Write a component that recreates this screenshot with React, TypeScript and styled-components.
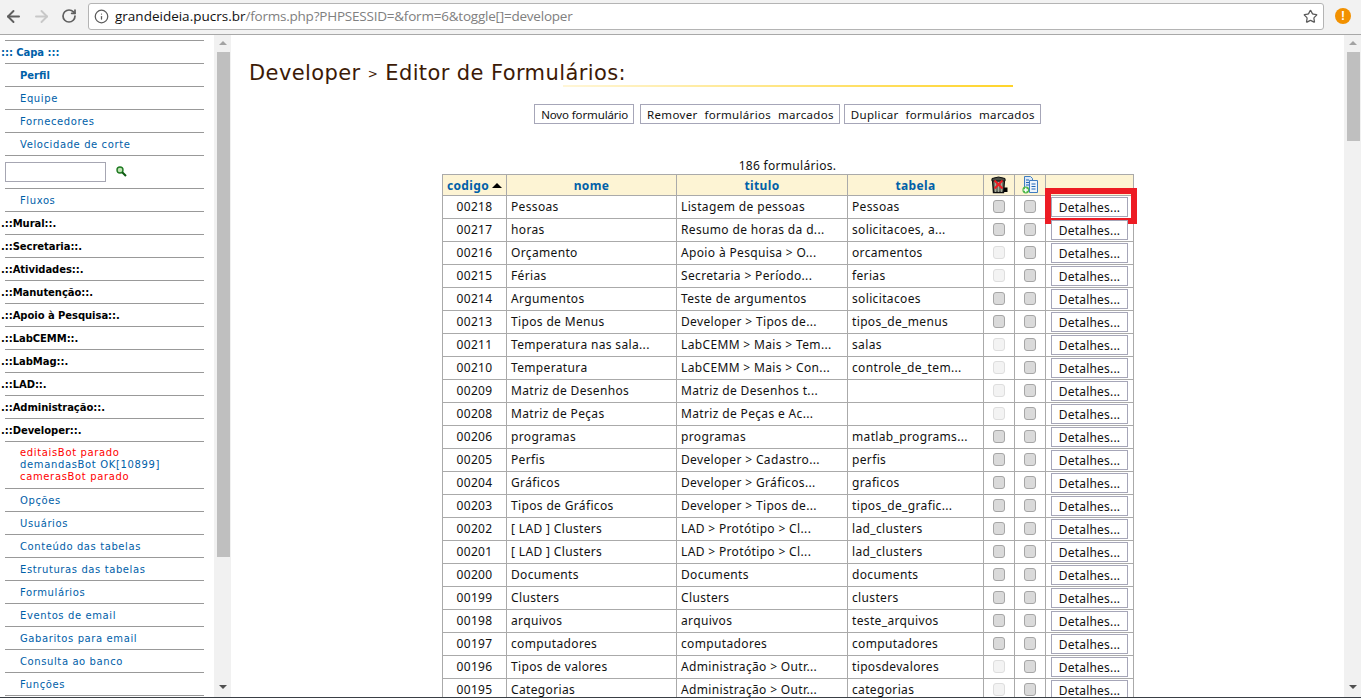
import React from 'react';
import styled, { createGlobalStyle } from 'styled-components';
import { ArrowLeft, ArrowRight, RotateCw, Info, Star } from 'lucide-react';

const GlobalStyle = createGlobalStyle`
    html, body {
        margin: 0;
        padding: 0;
        height: 100%;
        overflow: hidden;
        background: #fff;
    }
    * {
        box-sizing: border-box;
    }
`

const Page = styled.div`
    width: 1361px;
    height: 698px;
    display: flex;
    flex-direction: column;
    overflow: hidden;
    border-bottom: 1px solid #3a3f45;
`
const Toolbar = styled.div`
    height: 35px;
    flex: none;
    display: flex;
    align-items: flex-start;
    padding-top: 3px;
    background: #f2f2f2;
    border-bottom: 1px solid #a8a8a8;
`
const NavIcon = styled.div<{ $faded?: boolean }>`
    width: 28px;
    height: 26px;
    display: flex;
    align-items: center;
    justify-content: center;
    color: ${props => (props.$faded ? '#c8c8c8' : '#5f5f5f')};
`
const NavGroup = styled.div`
    width: 88px;
    flex: none;
    display: flex;
    margin-left: -1px;
    padding-right: 1px;
`
const AddressBar = styled.div`
    width: 1236px;
    height: 27px;
    flex: none;
    margin-left: 1px;
    display: flex;
    align-items: center;
    padding: 0 5px 0 5px;
    background: #fff;
    border: 1px solid #b4b4b4;
    border-radius: 3px;
    font-family: 'Open Sans', sans-serif;
    font-size: 13.5px;
    color: #808080;
`
const Url = styled.div`
    flex: 1;
    margin-left: 6px;
    padding-bottom: 2px;
    white-space: nowrap;
    letter-spacing: -0.22px;
    b {
        font-weight: 400;
        color: #111;
        letter-spacing: 0;
    }
`
const AlertBadge = styled.div`
    width: 16px;
    height: 16px;
    margin: 5px 0 0 11px;
    border-radius: 50%;
    background: #f29100;
    color: #fff;
    font-family: 'Liberation Sans', sans-serif;
    font-weight: 700;
    font-size: 12px;
    line-height: 16px;
    text-align: center;
`
const Body = styled.div`
    flex: 1;
    min-height: 0;
    display: flex;
`
const Sidebar = styled.nav`
    width: 214px;
    flex: none;
    padding-top: 5px;
    overflow: hidden;
    font-family: 'DejaVu Sans', sans-serif;
    font-size: 10px;
`
const SideRow = styled.div<{ $tall?: boolean }>`
    margin-left: 5px;
    width: 199px;
    height: ${props => (props.$tall ? '47px' : '23px')};
    border-top: 1px solid #999;
    padding-left: 15px;
    line-height: 24px;
    color: #0060a8;
    letter-spacing: 0.6px;
    white-space: nowrap;
`
const SideLink = styled(SideRow) <{ $strong?: boolean }>`
    font-weight: ${props => (props.$strong ? 700 : 400)};
    letter-spacing: ${props => (props.$strong ? '0' : '0.6px')};
`
const SideHeading = styled(SideRow) <{ $blue?: boolean }>`
    padding-left: 0;
    margin-left: 5px;
    text-indent: -4px;
    font-weight: 700;
    letter-spacing: -0.05px;
    color: ${props => (props.$blue ? '#0060a8' : '#000')};
`
const SearchRow = styled(SideRow)`
    height: 33px;
    padding: 6px 0 0 0;
    display: flex;
    align-items: flex-start;
`
const SearchInput = styled.input`
    width: 101px;
    height: 20px;
    border: 1px solid #a6a6b2;
    background: #fff;
    padding: 0;
`
const SearchIcon = styled.svg`
    margin: 4px 0 0 10px;
`
const BotBlock = styled(SideRow)`
    padding-top: 5px;
    line-height: 12px;
    letter-spacing: 0.65px;
`
const BotLine = styled.div<{ $down?: boolean }>`
    color: ${props => (props.$down ? '#f00' : '#0060a8')};
`
const Track = styled.div`
    width: 17px;
    flex: none;
    display: flex;
    flex-direction: column;
    align-items: center;
    background: #f1f1f1;
    padding: 0 0 0 1px;
    position: relative;
`
const ScrollArrow = styled.div<{ $down?: boolean }>`
    width: 0;
    height: 0;
    border-left: 4px solid transparent;
    border-right: 4px solid transparent;
    ${props => props.$down
        ? 'border-top: 4px solid #505050; position: absolute; bottom: 8px;'
        : 'border-bottom: 4px solid #a3a3a3; margin-top: 6px;'}
`
const Thumb = styled.div<{ $height: number }>`
    width: 13px;
    height: ${props => props.$height}px;
    margin-top: 7px;
    background: #bfbfbf;
`
const Main = styled.main`
    flex: 1;
    min-width: 0;
    overflow: hidden;
    padding-top: 25px;
`
const TitleRow = styled.div`
    margin-left: 18px;
    width: 764px;
    height: 26px;
    position: relative;
`
const Title = styled.h1`
    margin: 0;
    font-family: 'DejaVu Sans', sans-serif;
    font-weight: 400;
    font-size: 21px;
    line-height: 26px;
    letter-spacing: 0.4px;
    color: #3c1a06;
    white-space: nowrap;
`
const TitleArrow = styled.span`
    font-size: 12px;
    vertical-align: 2px;
`
const TitleRule = styled.div`
    position: absolute;
    left: 314px;
    right: 0;
    top: 25px;
    height: 2px;
    background: linear-gradient(to right, #fff6d8, #ffd42a);
`
const ActionRow = styled.div`
    display: flex;
    justify-content: center;
    gap: 4px;
    margin-top: 18px;
`
const PlainButton = styled.button<{ $tight?: boolean }>`
    height: 20px;
    padding: 0 5px 0 6px;
    margin-right: ${props => (props.$tight ? '2px' : '0')};
    background: #fff;
    border: 1px solid #a6a6b8;
    font-family: 'Noto Sans', sans-serif;
    font-size: 11.5px;
    line-height: 17px;
    letter-spacing: ${props => (props.$tight ? '-0.13px' : '0.32px')};
    word-spacing: ${props => (props.$tight ? '0' : '3.6px')};
    color: #111;
    white-space: nowrap;
`
const Count = styled.div`
    margin-top: 33px;
    height: 17px;
    text-align: center;
    font-family: 'Noto Sans', sans-serif;
    font-size: 12px;
    line-height: 18px;
    letter-spacing: 0.3px;
    color: #111;
`
const Table = styled.table`
    width: 691px;
    margin: 0 0 0 211px;
    table-layout: fixed;
    border-collapse: collapse;
    font-family: 'Noto Sans', sans-serif;
    font-size: 12px;
    letter-spacing: 0.35px;
    color: #111;
`
const Head = styled.th`
    height: 21px;
    padding: 0;
    background: #fdf4d4;
    border: 1px solid #aaa;
    color: #0060a8;
    font-size: 12px;
    font-weight: 700;
    line-height: 17px;
    text-align: center;
`
const Cell = styled.td<{ $center?: boolean }>`
    height: 23px;
    padding: 0 0 2px 4px;
    border: 1px solid #aaa;
    line-height: 17px;
    white-space: nowrap;
    overflow: hidden;
    text-align: ${props => (props.$center ? 'center' : 'left')};
    ${props => props.$center && 'padding: 0 0 2px;'}
`
const ActionCell = styled.td`
    position: relative;
    height: 23px;
    padding: 0 0 0 5px;
    border: 1px solid #aaa;
`
const Sort = styled.span`
    display: inline-block;
    width: 0;
    height: 0;
    margin-left: 3px;
    vertical-align: 2px;
    border-left: 5px solid transparent;
    border-right: 5px solid transparent;
    border-bottom: 5px solid #000;
`
const Check = styled.input`
    appearance: none;
    display: block;
    width: 12px;
    height: 13px;
    margin: 1px auto 0;
    background: #dadada;
    border: 1px solid #a6a6a6;
    border-radius: 3px;
    &:disabled {
        background: #f3f3f3;
        border-color: #dedede;
    }
`
const DetailsButton = styled(PlainButton)`
    display: block;
    width: 77px;
    height: 20px;
    padding: 0;
    font-size: 12px;
    letter-spacing: 0.2px;
`
const Highlight = styled.div`
    position: absolute;
    left: -1px;
    top: -8px;
    width: 92px;
    height: 36px;
    border: 6px solid #ed1c24;
`

type Row = [string, string, string, string, boolean?];

const rows: Row[] = [
    ['00218', 'Pessoas', 'Listagem de pessoas', 'Pessoas'],
    ['00217', 'horas', 'Resumo de horas da d...', 'solicitacoes, a...'],
    ['00216', 'Orçamento', 'Apoio à Pesquisa > O...', 'orcamentos', true],
    ['00215', 'Férias', 'Secretaria > Período...', 'ferias', true],
    ['00214', 'Argumentos', 'Teste de argumentos', 'solicitacoes'],
    ['00213', 'Tipos de Menus', 'Developer > Tipos de...', 'tipos_de_menus'],
    ['00211', 'Temperatura nas sala...', 'LabCEMM > Mais > Tem...', 'salas', true],
    ['00210', 'Temperatura', 'LabCEMM > Mais > Con...', 'controle_de_tem...', true],
    ['00209', 'Matriz de Desenhos', 'Matriz de Desenhos t...', '', true],
    ['00208', 'Matriz de Peças', 'Matriz de Peças e Ac...', '', true],
    ['00206', 'programas', 'programas', 'matlab_programs...'],
    ['00205', 'Perfis', 'Developer > Cadastro...', 'perfis'],
    ['00204', 'Gráficos', 'Developer > Gráficos...', 'graficos'],
    ['00203', 'Tipos de Gráficos', 'Developer > Tipos de...', 'tipos_de_grafic...'],
    ['00202', '[ LAD ] Clusters', 'LAD > Protótipo > Cl...', 'lad_clusters'],
    ['00201', '[ LAD ] Clusters', 'LAD > Protótipo > Cl...', 'lad_clusters'],
    ['00200', 'Documents', 'Documents', 'documents'],
    ['00199', 'Clusters', 'Clusters', 'clusters'],
    ['00198', 'arquivos', 'arquivos', 'teste_arquivos'],
    ['00197', 'computadores', 'computadores', 'computadores'],
    ['00196', 'Tipos de valores', 'Administração > Outr...', 'tiposdevalores', true],
    ['00195', 'Categorias', 'Administração > Outr...', 'categorias', true],
];

const menus = ['Mural', 'Secretaria', 'Atividades', 'Manutenção', 'Apoio à Pesquisa', 'LabCEMM', 'LabMag', 'LAD', 'Administração', 'Developer'];
const devLinks = ['Opções', 'Usuários', 'Conteúdo das tabelas', 'Estruturas das tabelas', 'Formulários', 'Eventos de email', 'Gabaritos para email', 'Consulta ao banco', 'Funções'];

const TrashIcon = () => (
    <svg width="17" height="18" viewBox="0 0 17 18" style={{ display: 'block', margin: '0 auto' }}>
        <path d="M1.5 4h12l-1 12.5h-10z" fill="#6f7566" stroke="#111" strokeWidth="1.4" />
        <path d="M1 2.5Q7.5 -.5 14 2.5V5H1z" fill="#4c4f45" stroke="#111" />
        <path d="M4.5 6v10M7.5 6v10M10.5 6v10" stroke="#a4a99a" />
        <path d="M13 11.5h3.5v4.5H13z" fill="#000" />
        <path d="M3.5 4.5l8 8M11.5 4.5l-8 8" stroke="#ed1c24" strokeWidth="2" />
    </svg>
);

const CopyIcon = () => (
    <svg width="17" height="18" viewBox="0 0 17 18" style={{ display: 'block', margin: '0 auto' }}>
        <path d="M2.5 .5h6l2 2v11h-8z" fill="#dbe8f7" stroke="#3f7cc0" />
        <path d="M7.5 4.5h8v12h-8z" fill="#eef5fc" stroke="#3f7cc0" />
        <path d="M4 4h3M4 6.5h3M4 9h3M9.5 8h4M9.5 10.5h4M9.5 13h4" stroke="#1f67b5" strokeWidth="1.2" />
        <circle cx="3.8" cy="14" r="3.4" fill="#4db848" />
        <path d="M3.8 11.8v4.4M1.6 14h4.4" stroke="#fff" strokeWidth="1.4" />
    </svg>
);

const App: React.FC = () => {
    return (
        <Page>
            <GlobalStyle />
            <Toolbar>
                <NavGroup>
                    <NavIcon><ArrowLeft size={19} strokeWidth={2.4} /></NavIcon>
                    <NavIcon $faded><ArrowRight size={19} strokeWidth={2.4} /></NavIcon>
                    <NavIcon><RotateCw size={16} strokeWidth={2.6} /></NavIcon>
                </NavGroup>
                <AddressBar>
                    <Info size={15} color="#5a5a5a" strokeWidth={2} />
                    <Url><b>grandeideia.pucrs.br</b>/forms.php?PHPSESSID=&amp;form=6&amp;toggle[]=developer</Url>
                    <Star size={15} color="#5a5a5a" strokeWidth={2} />
                </AddressBar>
                <AlertBadge>!</AlertBadge>
            </Toolbar>
            <Body>
                <Sidebar>
                    <SideHeading $blue>::: Capa :::</SideHeading>
                    <SideLink $strong>Perfil</SideLink>
                    <SideLink>Equipe</SideLink>
                    <SideLink>Fornecedores</SideLink>
                    <SideLink>Velocidade de corte</SideLink>
                    <SearchRow>
                        <SearchInput />
                        <SearchIcon width="11" height="11" viewBox="0 0 11 11">
                            <circle cx="4" cy="4" r="3" fill="#bfe3b4" stroke="#1f7a22" strokeWidth="1.4" />
                            <path d="M6.2 6.2L10 10" stroke="#0c5a10" strokeWidth="2" />
                        </SearchIcon>
                    </SearchRow>
                    <SideLink>Fluxos</SideLink>
                    {menus.map(menu => (
                        <SideHeading key={menu}>.::{menu}::.</SideHeading>
                    ))}
                    <BotBlock $tall>
                        <BotLine $down>editaisBot parado</BotLine>
                        <BotLine>demandasBot OK[10899]</BotLine>
                        <BotLine $down>camerasBot parado</BotLine>
                    </BotBlock>
                    {devLinks.map(link => (
                        <SideLink key={link}>{link}</SideLink>
                    ))}
                    <SideLink />
                </Sidebar>
                <Track>
                    <ScrollArrow />
                    <Thumb $height={505} />
                    <ScrollArrow $down />
                </Track>
                <Main>
                    <TitleRow>
                        <Title>Developer <TitleArrow>&gt;</TitleArrow> Editor de Formulários:</Title>
                        <TitleRule />
                    </TitleRow>
                    <ActionRow>
                        <PlainButton $tight>Novo formulário</PlainButton>
                        <PlainButton>Remover formulários marcados</PlainButton>
                        <PlainButton>Duplicar formulários marcados</PlainButton>
                    </ActionRow>
                    <Count>186 formulários.</Count>
                    <Table>
                        <colgroup>
                            <col style={{ width: 64 }} />
                            <col style={{ width: 170 }} />
                            <col style={{ width: 171 }} />
                            <col style={{ width: 136 }} />
                            <col style={{ width: 31 }} />
                            <col style={{ width: 31 }} />
                            <col style={{ width: 88 }} />
                        </colgroup>
                        <thead>
                            <tr>
                                <Head>codigo<Sort /></Head>
                                <Head>nome</Head>
                                <Head>titulo</Head>
                                <Head>tabela</Head>
                                <Head><TrashIcon /></Head>
                                <Head><CopyIcon /></Head>
                                <Head />
                            </tr>
                        </thead>
                        <tbody>
                            {rows.map(([code, name, title, table, locked], index) => (
                                <tr key={code}>
                                    <Cell $center>{code}</Cell>
                                    <Cell>{name}</Cell>
                                    <Cell>{title}</Cell>
                                    <Cell>{table}</Cell>
                                    <Cell $center><Check type="checkbox" disabled={locked} /></Cell>
                                    <Cell $center><Check type="checkbox" /></Cell>
                                    <ActionCell>
                                        <DetailsButton>Detalhes...</DetailsButton>
                                        {index === 0 && <Highlight />}
                                    </ActionCell>
                                </tr>
                            ))}
                        </tbody>
                    </Table>
                </Main>
                <Track>
                    <ScrollArrow />
                    <Thumb $height={89} />
                    <ScrollArrow $down />
                </Track>
            </Body>
        </Page>
    );
};

export default App;
